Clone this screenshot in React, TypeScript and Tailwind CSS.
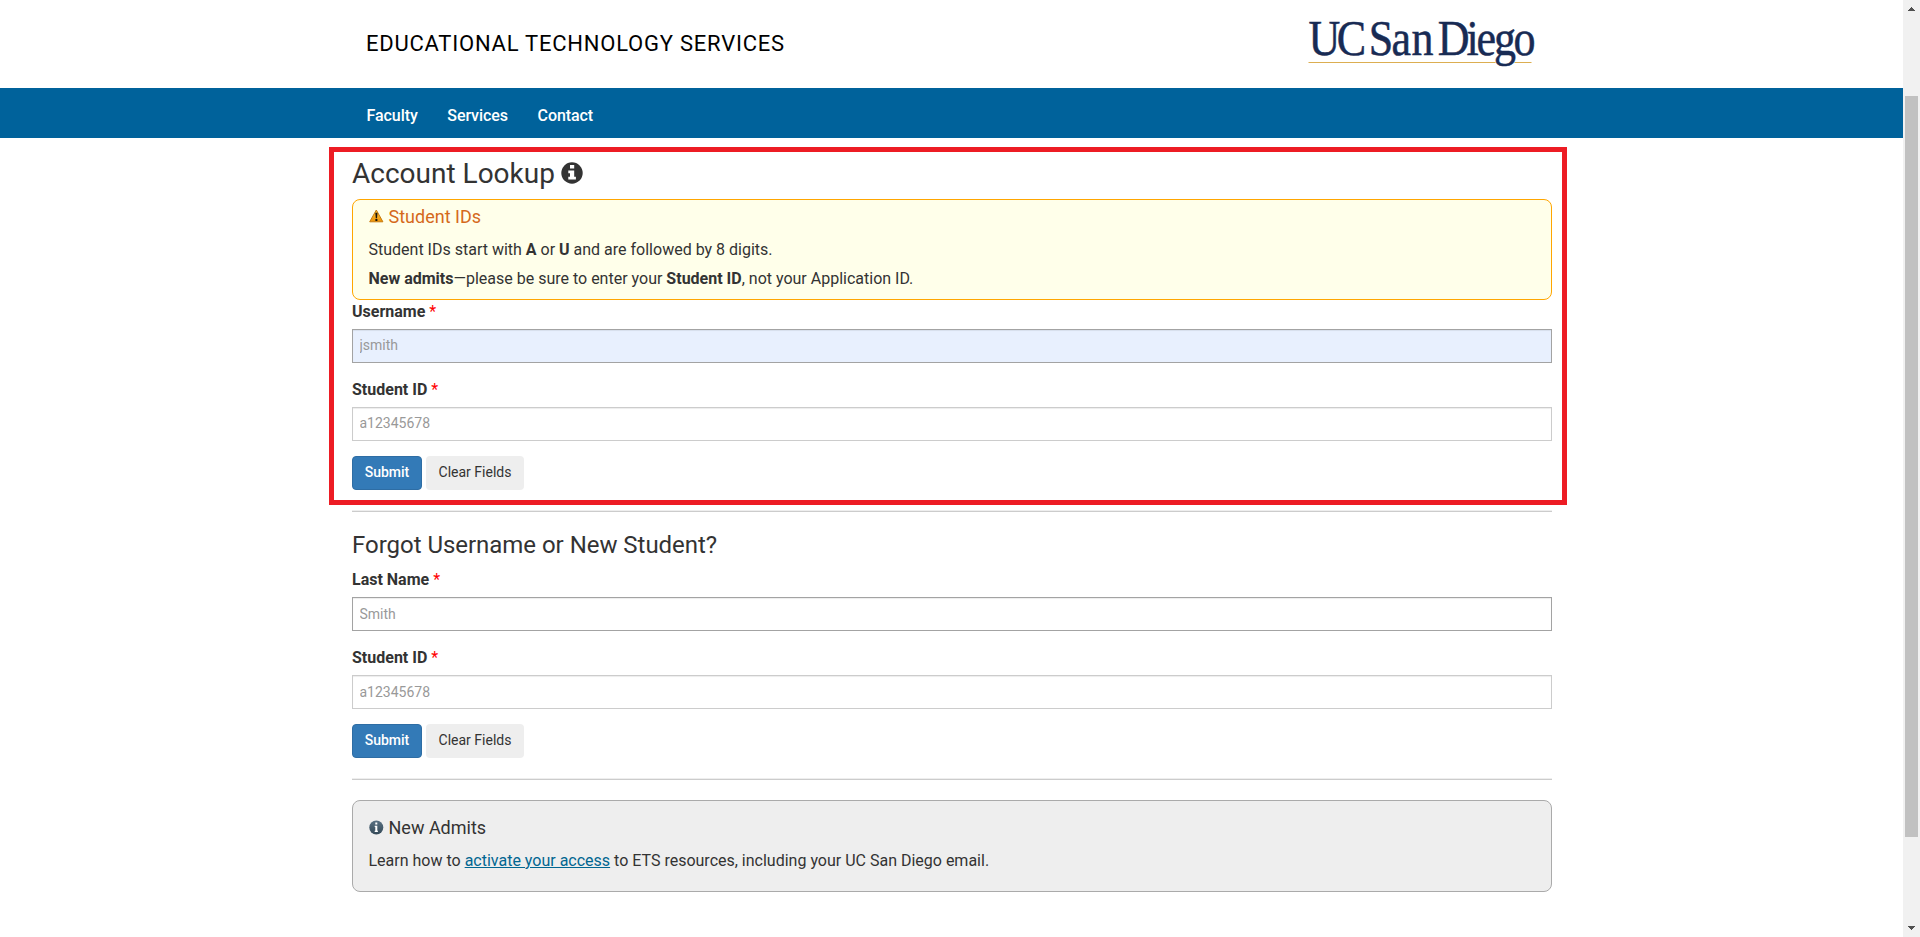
import type { ReactNode } from "react";

function Logo() {
  return (
    <svg width="230" height="60" viewBox="0 0 230 60" className="block overflow-visible">
      <path d="M0 45.5H187M206 45.5H223" stroke="#dcae51" strokeWidth="1" />
      <text
        transform="scale(0.88 1)"
        x="0 32.1 60 68.4 94.3 117 132 146.8 179.6 191 210.8 233"
        y="38"
        fontSize="50"
        fontFamily="'Liberation Serif', serif"
        fill="#182b54"
        stroke="#182b54"
        strokeWidth="0.5"
      >
        UC San Diego
      </text>
    </svg>
  );
}

function Field({ label, placeholder, className }: { label: string; placeholder: string; className: string }) {
  return (
    <div className="h-[78px]">
      <label className="block h-7 text-base leading-[22px] font-bold text-[#333]">
        {label} <span className="font-normal text-[#f00]">*</span>
      </label>
      <input
        placeholder={placeholder}
        className={`block h-[34px] w-full border pr-1.5 pl-[6.5px] text-sm shadow-[inset_0_1px_1px_rgba(0,0,0,0.075)] placeholder:text-[#999] ${className}`}
      />
    </div>
  );
}

function Buttons() {
  return (
    <div className="-mt-[7px] flex h-[34px] gap-1">
      <button className="w-[70px] rounded border border-[#2e6da4] bg-[#337ab7] pb-0.5 text-sm font-medium text-white">Submit</button>
      <button className="w-[98px] rounded bg-[#eee] pb-0.5 text-sm text-[#333]">Clear Fields</button>
    </div>
  );
}

function Rule() {
  return <div className="mt-5 h-0.5 border-t border-b border-t-[#eee] border-b-[#ccc]" />;
}

function NavItem({ children }: { children: ReactNode }) {
  return <a className="text-base font-medium tracking-[-0.06px] text-white">{children}</a>;
}

export default function App() {
  return (
    <div className="flex h-[937px] overflow-hidden bg-white font-['Roboto',sans-serif] text-base text-[#333]">
      <div className="relative min-w-0 flex-1">
        <header className="mx-auto flex h-[88px] w-[1200px] translate-x-[0.5px] justify-between pl-[14px]">
          <div className="pt-7 text-[22px] leading-8 tracking-[0.77px] text-black">EDUCATIONAL TECHNOLOGY SERVICES</div>
          <div className="w-[244px] pt-[17px]">
            <Logo />
          </div>
        </header>
        <nav className="h-[50px] bg-[#00629b]">
          <div className="mx-auto flex h-full w-[1200px] items-center gap-[29.5px] pt-1.5 pl-[15px]">
            <NavItem>Faculty</NavItem>
            <NavItem>Services</NavItem>
            <NavItem>Contact</NavItem>
          </div>
        </nav>

        <main className="ml-[352px] w-[1200px]">
          <h1 className="flex h-[61px] items-center gap-1.5 pt-[11px] text-[28px] font-normal">
            Account Lookup
            <svg width="22" height="22" viewBox="0 0 22 22" className="-mt-0.5">
              <circle cx="11" cy="11" r="10.7" fill="#333" />
              <path d="M9 3h4.2v3.5H9zM7.3 8.4h5.9v6.3h1.7v2.8H7.3v-2.8H9v-3.5H7.3z" fill="#fff" />
            </svg>
          </h1>
          <section className="h-[101px] rounded-lg border border-[#ffa600] bg-[#ffffea] pr-4 pl-[15.5px]">
            <h2 className="flex h-[34px] items-center gap-[5px] text-lg text-[#d5691b]">
              <svg width="15" height="14" viewBox="0 0 15 14" className="-mt-0.5">
                <defs>
                  <linearGradient id="warn" x1="0" y1="0" x2="0" y2="1">
                    <stop offset="0" stopColor="#ffc83c" />
                    <stop offset="1" stopColor="#ee9207" />
                  </linearGradient>
                </defs>
                <path d="M7.3 1 13.9 12.8H.7z" fill="url(#warn)" stroke="#c57a10" strokeWidth="1" strokeLinejoin="round" />
                <path d="M6.3 3.8h2.2L8 9.2H6.8zM6.4 10h2v2h-2z" fill="#16120a" />
              </svg>
              Student IDs
            </h2>
            <p className="mt-1 h-[29px] leading-[24px]">
              Student IDs start with <b>A</b> or <b>U</b> and are followed by 8 digits.
            </p>
            <p className="leading-[24px]">
              <b>New admits</b>—please be sure to enter your <b>Student ID</b>, not your Application ID.
            </p>
          </section>
          <form className="pt-px">
            <Field label="Username" placeholder="jsmith" className="border-[#a3a3a3] bg-[#e8f0fe] pb-0.5" />
            <Field label="Student ID" placeholder="a12345678" className="border-[#ccc] pb-0.5" />
            <div className="pt-[6px]">
              <Buttons />
            </div>
          </form>
          <Rule />
          <h2 className="h-14 pt-[17px] text-2xl font-normal tracking-[-0.03px]">Forgot Username or New Student?</h2>
          <form className="pt-px">
            <Field label="Last Name" placeholder="Smith" className="border-[#a3a3a3]" />
            <Field label="Student ID" placeholder="a12345678" className="border-[#ccc]" />
            <div className="pt-[6px]">
              <Buttons />
            </div>
          </form>
          <Rule />
          <section className="mt-5 h-[92px] rounded-lg border border-[#aaa] bg-[#eee] pt-[10px] pr-4 pl-[15.5px]">
            <h2 className="flex h-[34px] items-center gap-[5px] text-lg">
              <svg width="15" height="15" viewBox="0 0 15 15" className="-mt-0.5">
                <defs>
                  <linearGradient id="info" x1="0" y1="0" x2="0" y2="1">
                    <stop offset="0" stopColor="#597183" />
                    <stop offset="1" stopColor="#344957" />
                  </linearGradient>
                </defs>
                <circle cx="7.3" cy="7.5" r="7" fill="url(#info)" />
                <path d="M6.3 2.6h2v2h-2zM5.7 5.8h2.6v5h.6v1.2H5.7v-1.2h.6V7h-.6z" fill="#fff" />
              </svg>
              New Admits
            </h2>
            <p className="mt-1 leading-[24px]">
              Learn how to <a className="text-[#016691] underline">activate your access</a> to ETS resources, including your UC San Diego email.
            </p>
          </section>
        </main>
        <div className="pointer-events-none absolute top-[147px] left-[329px] h-[358px] w-[1238px] border-[5px] border-[#ed1c24]" />
      </div>
      <aside className="flex w-[17px] flex-col items-center bg-[#f1f1f1]">
        <svg width="17" height="96" viewBox="0 0 17 96" shapeRendering="crispEdges">
          <path d="M5 11V10H6V9H7V8H8V7H9V8H10V9H11V10H12V11Z" fill="#505050" />
        </svg>
        <div className="h-[741px] w-[13px] bg-[#c1c1c1]" />
        <svg width="17" height="100" viewBox="0 0 17 100" shapeRendering="crispEdges">
          <path d="M5 89V90H6V91H7V92H8V93H9V92H10V91H11V90H12V89Z" fill="#505050" />
        </svg>
      </aside>
    </div>
  );
}
